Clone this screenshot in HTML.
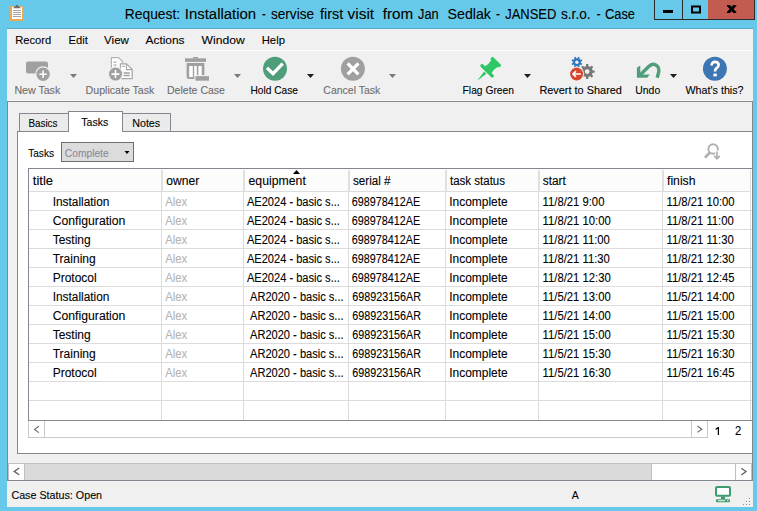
<!DOCTYPE html>
<html><head><meta charset="utf-8"><style>
html,body{margin:0;padding:0;width:757px;height:511px;overflow:hidden;background:#66c9e9;}
svg{position:absolute;left:0;top:0;display:block;}
text{font-family:"Liberation Sans",sans-serif;white-space:pre;}
</style></head><body>
<svg width="757" height="511" viewBox="0 0 757 511">
<rect x="0" y="0" width="757" height="511" fill="#66c9e9"/>
<rect x="7" y="28" width="746" height="1" fill="#5aa9cb"/>
<rect x="7" y="29" width="746" height="478" fill="#f0f0f0"/>
<rect x="10" y="6" width="14" height="15" fill="#eba957"/>
<rect x="12" y="7" width="10" height="12" fill="#ffffff"/>
<path d="M13.6 8.2 L20.4 8.2 L20.4 7.2 Q19.6 6.6 18.7 6.4 Q18.3 4.8 17 4.8 Q15.7 4.8 15.3 6.4 Q14.4 6.6 13.6 7.2 Z" fill="#6e6e6e"/>
<rect x="13" y="10" width="8" height="1" fill="#a4a4a4"/>
<rect x="13" y="12" width="8" height="1" fill="#a4a4a4"/>
<rect x="13" y="14" width="8" height="1" fill="#a4a4a4"/>
<rect x="13" y="16" width="8" height="1" fill="#a4a4a4"/>
<text x="124.80" y="19" font-size="15.4" fill="#000" textLength="55.29" lengthAdjust="spacingAndGlyphs" stroke="#000" stroke-width="0.1">Request:</text>
<text x="184.80" y="19" font-size="15.4" fill="#000" textLength="71.32" lengthAdjust="spacingAndGlyphs" stroke="#000" stroke-width="0.1">Installation</text>
<text x="262.10" y="19" font-size="15.4" fill="#000" textLength="3.78" lengthAdjust="spacingAndGlyphs" stroke="#000" stroke-width="0.1">-</text>
<text x="271.00" y="19" font-size="15.4" fill="#000" textLength="42.98" lengthAdjust="spacingAndGlyphs" stroke="#000" stroke-width="0.1">servise</text>
<text x="320.00" y="19" font-size="15.4" fill="#000" textLength="23.21" lengthAdjust="spacingAndGlyphs" stroke="#000" stroke-width="0.1">first</text>
<text x="347.50" y="19" font-size="15.4" fill="#000" textLength="26.62" lengthAdjust="spacingAndGlyphs" stroke="#000" stroke-width="0.1">visit</text>
<text x="382.70" y="19" font-size="15.4" fill="#000" textLength="30.40" lengthAdjust="spacingAndGlyphs" stroke="#000" stroke-width="0.1">from</text>
<text x="418.00" y="19" font-size="15.4" fill="#000" textLength="20.58" lengthAdjust="spacingAndGlyphs" stroke="#000" stroke-width="0.1">Jan</text>
<text x="447.50" y="19" font-size="15.4" fill="#000" textLength="43.44" lengthAdjust="spacingAndGlyphs" stroke="#000" stroke-width="0.1">Sedlak</text>
<text x="496.10" y="19" font-size="15.4" fill="#000" textLength="3.98" lengthAdjust="spacingAndGlyphs" stroke="#000" stroke-width="0.1">-</text>
<text x="505.20" y="19" font-size="15.4" fill="#000" textLength="51.21" lengthAdjust="spacingAndGlyphs" stroke="#000" stroke-width="0.1">JANSED</text>
<text x="561.00" y="19" font-size="15.4" fill="#000" textLength="29.58" lengthAdjust="spacingAndGlyphs" stroke="#000" stroke-width="0.1">s.r.o.</text>
<text x="596.50" y="19" font-size="15.4" fill="#000" textLength="4.18" lengthAdjust="spacingAndGlyphs" stroke="#000" stroke-width="0.1">-</text>
<text x="605.00" y="19" font-size="15.4" fill="#000" textLength="30.00" lengthAdjust="spacingAndGlyphs" stroke="#000" stroke-width="0.1">Case</text>
<rect x="654" y="0" width="101" height="20" fill="#2b2b2b"/>
<rect x="655" y="0" width="27" height="19" fill="#66c9e9"/>
<rect x="683" y="0" width="25" height="19" fill="#66c9e9"/>
<rect x="708" y="0" width="46" height="19" fill="#c35b50"/>
<rect x="663" y="10" width="10" height="3" fill="#000"/>
<rect x="692" y="6.5" width="8" height="6" fill="none" stroke="#000" stroke-width="2"/>
<clipPath id="cx"><rect x="726.8" y="5" width="9.6" height="8"/></clipPath>
<path d="M726.6 3.6 L736.6 14.4 M736.6 3.6 L726.6 14.4" stroke="#000" stroke-width="2.9" clip-path="url(#cx)"/>
<rect x="7" y="50" width="746" height="1" fill="#ffffff"/>
<text x="15.20" y="44" font-size="11.2" fill="#000" textLength="36.10" lengthAdjust="spacingAndGlyphs" stroke="#000" stroke-width="0.1">Record</text>
<text x="68.50" y="44" font-size="11.2" fill="#000" textLength="19.30" lengthAdjust="spacingAndGlyphs" stroke="#000" stroke-width="0.1">Edit</text>
<text x="104.10" y="44" font-size="11.2" fill="#000" textLength="24.82" lengthAdjust="spacingAndGlyphs" stroke="#000" stroke-width="0.1">View</text>
<text x="145.50" y="44" font-size="11.2" fill="#000" textLength="39.08" lengthAdjust="spacingAndGlyphs" stroke="#000" stroke-width="0.1">Actions</text>
<text x="201.50" y="44" font-size="11.2" fill="#000" textLength="43.23" lengthAdjust="spacingAndGlyphs" stroke="#000" stroke-width="0.1">Window</text>
<text x="261.70" y="44" font-size="11.2" fill="#000" textLength="23.28" lengthAdjust="spacingAndGlyphs" stroke="#000" stroke-width="0.1">Help</text>
<text x="14.40" y="94" font-size="11.2" fill="#6d6d6d" textLength="45.85" lengthAdjust="spacingAndGlyphs" stroke="#6d6d6d" stroke-width="0.1">New Task</text>
<text x="85.60" y="94" font-size="11.2" fill="#6d6d6d" textLength="68.73" lengthAdjust="spacingAndGlyphs" stroke="#6d6d6d" stroke-width="0.1">Duplicate Task</text>
<text x="167.00" y="94" font-size="11.2" fill="#6d6d6d" textLength="57.98" lengthAdjust="spacingAndGlyphs" stroke="#6d6d6d" stroke-width="0.1">Delete Case</text>
<text x="250.40" y="94" font-size="11.2" fill="#000" textLength="47.49" lengthAdjust="spacingAndGlyphs" stroke="#000" stroke-width="0.1">Hold Case</text>
<text x="323.30" y="94" font-size="11.2" fill="#6d6d6d" textLength="57.05" lengthAdjust="spacingAndGlyphs" stroke="#6d6d6d" stroke-width="0.1">Cancel Task</text>
<text x="462.60" y="94" font-size="11.2" fill="#000" textLength="51.38" lengthAdjust="spacingAndGlyphs" stroke="#000" stroke-width="0.1">Flag Green</text>
<text x="539.40" y="94" font-size="11.2" fill="#000" textLength="82.52" lengthAdjust="spacingAndGlyphs" stroke="#000" stroke-width="0.1">Revert to Shared</text>
<text x="635.30" y="94" font-size="11.2" fill="#000" textLength="24.88" lengthAdjust="spacingAndGlyphs" stroke="#000" stroke-width="0.1">Undo</text>
<text x="685.50" y="94" font-size="11.2" fill="#000" textLength="58.10" lengthAdjust="spacingAndGlyphs" stroke="#000" stroke-width="0.1">What's this?</text>
<rect x="26" y="61.5" width="22" height="12" rx="2" fill="#a0a0a0"/>
<circle cx="43.1" cy="74.2" r="7.9" fill="#f0f0f0"/><circle cx="43.1" cy="74.2" r="6.7" fill="#a0a0a0"/>
<path d="M39.4 74.2 H46.8 M43.1 70.5 V77.9" stroke="#fff" stroke-width="1.5"/>
<path d="M70 74 L77 74 L73.5 78 Z" fill="#7a7a7a"/>
<path d="M234 74 L241 74 L237.5 78 Z" fill="#7a7a7a"/>
<path d="M307 74 L314 74 L310.5 78 Z" fill="#1e1e1e"/>
<path d="M389 74 L396 74 L392.5 78 Z" fill="#7a7a7a"/>
<path d="M524 74 L531 74 L527.5 78 Z" fill="#1e1e1e"/>
<path d="M670 74 L677 74 L673.5 78 Z" fill="#1e1e1e"/>
<path d="M111.4 57.6 H118.6 L122.6 61.6 V70 H111.4 Z" fill="#fff" stroke="#b4b4b4" stroke-width="1.2"/>
<path d="M120.4 63.8 H126.6 L132.2 69.4 V78.6 H120.4 Z" fill="#fff" stroke="#a8a8a8" stroke-width="1.3"/>
<path d="M126.4 64 V69.6 H132" fill="none" stroke="#a8a8a8" stroke-width="1.1"/>
<path d="M123.6 73.1 H129.8 M123.6 75.6 H129.8" stroke="#a0a0a0" stroke-width="1.5"/>
<path d="M113.4 62.2 H116.6 M113.4 65.2 H116.6 M122.2 66.4 H124.8" stroke="#b0b0b0" stroke-width="1.2"/>
<circle cx="115.5" cy="74.1" r="7.6" fill="#f0f0f0"/><circle cx="115.5" cy="74.1" r="6.5" fill="#a0a0a0"/>
<path d="M111.5 74.1 H119.5 M115.5 70.1 V78.1" stroke="#fff" stroke-width="1.6"/>
<rect x="185" y="58.3" width="21" height="3.6" fill="#a0a0a0"/>
<rect x="193.2" y="57" width="4.8" height="1.5" fill="#a0a0a0"/>
<path d="M186.6 63 H204.4 V79 H188.6 Q186.6 79 186.6 77 Z" fill="#a0a0a0"/>
<rect x="189.2" y="66" width="3.6" height="11" fill="#fff"/>
<rect x="194.2" y="66" width="2.6" height="11" fill="#fff"/>
<rect x="198.4" y="66" width="3.3" height="11" fill="#fff"/>
<rect x="194.5" y="75" width="15.5" height="6.5" fill="#f0f0f0"/>
<rect x="195.5" y="76.1" width="13.5" height="4.6" fill="#a0a0a0"/>
<circle cx="275" cy="68.8" r="12" fill="#4e9e7a"/>
<path d="M267 67.9 L273 73.7 L282.7 63.6" fill="none" stroke="#fff" stroke-width="3.4"/>
<circle cx="352.9" cy="68.8" r="12" fill="#a0a0a0"/>
<path d="M347.6 63.4 L358.4 74.4 M358.4 63.4 L347.6 74.4" stroke="#fff" stroke-width="3.2"/>
<g fill="#2ec866" transform="translate(477.2,80.7) rotate(-45)"><path d="M0 0 L11.4 -1.6 L11.4 1.6 Z"/><rect x="12.4" y="-8.8" width="3.3" height="17.6" rx="1.3"/><path d="M15 -4.8 Q20 -3.4 25 -4.8 L25 4.8 Q20 3.4 15 4.8 Z"/><rect x="24.4" y="-6.3" width="3.6" height="12.6" rx="1.1"/></g>
<path d="M577.58 58.16 L578.09 56.83 L579.86 57.56 L579.28 58.86 L580.24 59.82 L581.54 59.24 L582.27 61.01 L580.94 61.52 L580.94 62.88 L582.27 63.39 L581.54 65.16 L580.24 64.58 L579.28 65.54 L579.86 66.84 L578.09 67.57 L577.58 66.24 L576.22 66.24 L575.71 67.57 L573.94 66.84 L574.52 65.54 L573.56 64.58 L572.26 65.16 L571.53 63.39 L572.86 62.88 L572.86 61.52 L571.53 61.01 L572.26 59.24 L573.56 59.82 L574.52 58.86 L573.94 57.56 L575.71 56.83 L576.22 58.16 Z" fill="#2f78be"/><circle cx="576.9" cy="62.2" r="1.7" fill="#f0f0f0"/>
<path d="M586.04 66.12 L586.01 64.09 L588.39 64.09 L588.36 66.12 L590.25 66.90 L591.67 65.45 L593.35 67.13 L591.90 68.55 L592.68 70.44 L594.71 70.41 L594.71 72.79 L592.68 72.76 L591.90 74.65 L593.35 76.07 L591.67 77.75 L590.25 76.30 L588.36 77.08 L588.39 79.11 L586.01 79.11 L586.04 77.08 L584.15 76.30 L582.73 77.75 L581.05 76.07 L582.50 74.65 L581.72 72.76 L579.69 72.79 L579.69 70.41 L581.72 70.44 L582.50 68.55 L581.05 67.13 L582.73 65.45 L584.15 66.90 Z" fill="#787878"/><circle cx="587.2" cy="71.6" r="2.3" fill="#f0f0f0"/>
<circle cx="576.6" cy="74" r="7.5" fill="#f0f0f0"/><circle cx="576.6" cy="74" r="6.5" fill="#d9462e"/>
<path d="M580.8 74 H573.4 M575.9 71.2 L573.1 74 L575.9 76.8" fill="none" stroke="#fff" stroke-width="1.7"/>
<path d="M639.5 75.5 L649 66.3 C651.4 64.2 653.8 63.9 655.8 64.9 C658.6 66.3 659.4 69.8 658.4 73.2 L657.2 77.8" fill="none" stroke="#4e9e7a" stroke-width="3.4"/>
<path d="M636.9 67.8 L640.3 65.4 L640.3 74.5 L649.8 74.5 L647.2 77.8 L636.9 77.8 Z" fill="#4e9e7a"/>
<circle cx="714.9" cy="68.8" r="12" fill="#3c76b4"/>
<path d="M711.6 65.6 C711.6 63 713.2 61.8 715.1 61.8 C717.2 61.8 718.6 63.1 718.6 65 C718.6 66.8 717.5 67.6 716.4 68.4 C715.6 69 715.1 69.6 715.1 70.8 L715.1 71.6" fill="none" stroke="#fff" stroke-width="2.7"/>
<rect x="713.4" y="73.6" width="3.4" height="2.8" fill="#fff"/>
<rect x="7" y="100" width="746" height="1" fill="#f8f8f8"/>
<rect x="7.5" y="101.5" width="745" height="379" fill="#f0f0f0" stroke="#828790" stroke-width="1"/>
<rect x="19.5" y="113.5" width="49" height="19" fill="#ebebeb" stroke="#828790"/>
<rect x="122.5" y="113.5" width="48" height="19" fill="#ebebeb" stroke="#828790"/>
<rect x="17.5" y="131.5" width="735" height="322" fill="#fff" stroke="#828790"/>
<rect x="68.5" y="111.5" width="54" height="20" fill="#fff" stroke="#828790"/>
<rect x="69" y="131" width="53" height="1" fill="#fff"/>
<text x="28.40" y="127" font-size="11.2" fill="#000" textLength="29.09" lengthAdjust="spacingAndGlyphs" stroke="#000" stroke-width="0.1">Basics</text>
<text x="81.30" y="126" font-size="11.2" fill="#000" textLength="26.98" lengthAdjust="spacingAndGlyphs" stroke="#000" stroke-width="0.1">Tasks</text>
<text x="132.20" y="127" font-size="11.2" fill="#000" textLength="28.01" lengthAdjust="spacingAndGlyphs" stroke="#000" stroke-width="0.1">Notes</text>
<text x="28.20" y="157" font-size="11.2" fill="#000" textLength="25.78" lengthAdjust="spacingAndGlyphs" stroke="#000" stroke-width="0.1">Tasks</text>
<rect x="61.5" y="142.5" width="72" height="19" fill="#dcdcdc" stroke="#6e6e6e"/>
<text x="64.80" y="157" font-size="11.2" fill="#8a8a9a" textLength="43.88" lengthAdjust="spacingAndGlyphs" stroke="#8a8a9a" stroke-width="0.1">Complete</text>
<path d="M124.5 151 H129.5 L127 154 Z" fill="#000"/>
<g stroke="#b0b0b0" fill="none" stroke-width="1.9"><circle cx="713.1" cy="149" r="4.75"/><path d="M709.6 152.8 L705 157.6" stroke-width="2.8"/><path d="M717 150.5 V158" stroke="#fff" stroke-width="3.5"/><path d="M717 151.5 V158.6 M714.2 155.8 L717 158.8 L719.8 155.8" stroke-width="1.7"/></g>
<rect x="28" y="168" width="725" height="253" fill="#fff"/>
<rect x="29" y="169" width="723" height="22" fill="#fcfcfc"/>
<rect x="28" y="168" width="725" height="1" fill="#828790"/>
<rect x="28" y="168" width="1" height="253" fill="#828790"/>
<rect x="28" y="420" width="725" height="1" fill="#828790"/>
<rect x="752" y="168" width="1" height="286" fill="#828790"/>
<rect x="29" y="191" width="723" height="1" fill="#dcdcdc"/>
<rect x="161" y="191" width="1" height="229" fill="#dcdcdc"/>
<rect x="161" y="170" width="2" height="21" fill="#e0e0e0"/>
<rect x="243" y="191" width="1" height="229" fill="#dcdcdc"/>
<rect x="243" y="170" width="2" height="21" fill="#e0e0e0"/>
<rect x="348" y="191" width="1" height="229" fill="#dcdcdc"/>
<rect x="348" y="170" width="2" height="21" fill="#e0e0e0"/>
<rect x="445" y="191" width="1" height="229" fill="#dcdcdc"/>
<rect x="445" y="170" width="2" height="21" fill="#e0e0e0"/>
<rect x="538" y="191" width="1" height="229" fill="#dcdcdc"/>
<rect x="538" y="170" width="2" height="21" fill="#e0e0e0"/>
<rect x="662" y="191" width="1" height="229" fill="#dcdcdc"/>
<rect x="662" y="170" width="2" height="21" fill="#e0e0e0"/>
<rect x="750" y="170" width="1" height="250" fill="#dcdcdc"/>
<rect x="751" y="169" width="1" height="251" fill="#fff"/>
<rect x="29" y="210" width="723" height="1" fill="#dcdcdc"/>
<rect x="29" y="229" width="723" height="1" fill="#dcdcdc"/>
<rect x="29" y="248" width="723" height="1" fill="#dcdcdc"/>
<rect x="29" y="267" width="723" height="1" fill="#dcdcdc"/>
<rect x="29" y="286" width="723" height="1" fill="#dcdcdc"/>
<rect x="29" y="305" width="723" height="1" fill="#dcdcdc"/>
<rect x="29" y="324" width="723" height="1" fill="#dcdcdc"/>
<rect x="29" y="343" width="723" height="1" fill="#dcdcdc"/>
<rect x="29" y="362" width="723" height="1" fill="#dcdcdc"/>
<rect x="29" y="381" width="723" height="1" fill="#dcdcdc"/>
<rect x="29" y="400" width="723" height="1" fill="#dcdcdc"/>
<text x="32.80" y="185" font-size="12.5" fill="#000" textLength="20.30" lengthAdjust="spacingAndGlyphs" stroke="#000" stroke-width="0.1">title</text>
<text x="166.20" y="185" font-size="12.5" fill="#000" textLength="32.99" lengthAdjust="spacingAndGlyphs" stroke="#000" stroke-width="0.1">owner</text>
<text x="248.50" y="185" font-size="12.5" fill="#000" textLength="57.32" lengthAdjust="spacingAndGlyphs" stroke="#000" stroke-width="0.1">equipment</text>
<text x="353.00" y="185" font-size="12.5" fill="#000" textLength="37.49" lengthAdjust="spacingAndGlyphs" stroke="#000" stroke-width="0.1">serial #</text>
<text x="450.00" y="185" font-size="12.5" fill="#000" textLength="55.00" lengthAdjust="spacingAndGlyphs" stroke="#000" stroke-width="0.1">task status</text>
<text x="542.70" y="185" font-size="12.5" fill="#000" textLength="23.11" lengthAdjust="spacingAndGlyphs" stroke="#000" stroke-width="0.1">start</text>
<text x="667.00" y="185" font-size="12.5" fill="#000" textLength="28.48" lengthAdjust="spacingAndGlyphs" stroke="#000" stroke-width="0.1">finish</text>
<path d="M293 174 H300 L296.5 170 Z" fill="#000"/>
<text x="52.70" y="206" font-size="12.5" fill="#000" textLength="56.71" lengthAdjust="spacingAndGlyphs" stroke="#000" stroke-width="0.1">Installation</text>
<text x="165.20" y="206" font-size="12.5" fill="#b4b4b4" textLength="22.11" lengthAdjust="spacingAndGlyphs" stroke="#b4b4b4" stroke-width="0.1">Alex</text>
<text x="246.90" y="206" font-size="12.5" fill="#000" textLength="93.01" lengthAdjust="spacingAndGlyphs" stroke="#000" stroke-width="0.1">AE2024 - basic s...</text>
<text x="351.80" y="206" font-size="12.5" fill="#000" textLength="68.49" lengthAdjust="spacingAndGlyphs" stroke="#000" stroke-width="0.1">698978412AE</text>
<text x="449.20" y="206" font-size="12.5" fill="#000" textLength="58.59" lengthAdjust="spacingAndGlyphs" stroke="#000" stroke-width="0.1">Incomplete</text>
<text x="542.60" y="206" font-size="12.5" fill="#000" textLength="61.81" lengthAdjust="spacingAndGlyphs" stroke="#000" stroke-width="0.1">11/8/21 9:00</text>
<text x="666.50" y="206" font-size="12.5" fill="#000" textLength="68.08" lengthAdjust="spacingAndGlyphs" stroke="#000" stroke-width="0.1">11/8/21 10:00</text>
<text x="52.70" y="225" font-size="12.5" fill="#000" textLength="72.70" lengthAdjust="spacingAndGlyphs" stroke="#000" stroke-width="0.1">Configuration</text>
<text x="165.20" y="225" font-size="12.5" fill="#b4b4b4" textLength="22.11" lengthAdjust="spacingAndGlyphs" stroke="#b4b4b4" stroke-width="0.1">Alex</text>
<text x="246.90" y="225" font-size="12.5" fill="#000" textLength="93.01" lengthAdjust="spacingAndGlyphs" stroke="#000" stroke-width="0.1">AE2024 - basic s...</text>
<text x="351.80" y="225" font-size="12.5" fill="#000" textLength="68.49" lengthAdjust="spacingAndGlyphs" stroke="#000" stroke-width="0.1">698978412AE</text>
<text x="449.20" y="225" font-size="12.5" fill="#000" textLength="58.59" lengthAdjust="spacingAndGlyphs" stroke="#000" stroke-width="0.1">Incomplete</text>
<text x="542.60" y="225" font-size="12.5" fill="#000" textLength="68.08" lengthAdjust="spacingAndGlyphs" stroke="#000" stroke-width="0.1">11/8/21 10:00</text>
<text x="666.50" y="225" font-size="12.5" fill="#000" textLength="67.24" lengthAdjust="spacingAndGlyphs" stroke="#000" stroke-width="0.1">11/8/21 11:00</text>
<text x="52.70" y="244" font-size="12.5" fill="#000" textLength="38.00" lengthAdjust="spacingAndGlyphs" stroke="#000" stroke-width="0.1">Testing</text>
<text x="165.20" y="244" font-size="12.5" fill="#b4b4b4" textLength="22.11" lengthAdjust="spacingAndGlyphs" stroke="#b4b4b4" stroke-width="0.1">Alex</text>
<text x="246.90" y="244" font-size="12.5" fill="#000" textLength="93.01" lengthAdjust="spacingAndGlyphs" stroke="#000" stroke-width="0.1">AE2024 - basic s...</text>
<text x="351.80" y="244" font-size="12.5" fill="#000" textLength="68.49" lengthAdjust="spacingAndGlyphs" stroke="#000" stroke-width="0.1">698978412AE</text>
<text x="449.20" y="244" font-size="12.5" fill="#000" textLength="58.59" lengthAdjust="spacingAndGlyphs" stroke="#000" stroke-width="0.1">Incomplete</text>
<text x="542.60" y="244" font-size="12.5" fill="#000" textLength="67.24" lengthAdjust="spacingAndGlyphs" stroke="#000" stroke-width="0.1">11/8/21 11:00</text>
<text x="666.50" y="244" font-size="12.5" fill="#000" textLength="67.24" lengthAdjust="spacingAndGlyphs" stroke="#000" stroke-width="0.1">11/8/21 11:30</text>
<text x="52.70" y="263" font-size="12.5" fill="#000" textLength="42.99" lengthAdjust="spacingAndGlyphs" stroke="#000" stroke-width="0.1">Training</text>
<text x="165.20" y="263" font-size="12.5" fill="#b4b4b4" textLength="22.11" lengthAdjust="spacingAndGlyphs" stroke="#b4b4b4" stroke-width="0.1">Alex</text>
<text x="246.90" y="263" font-size="12.5" fill="#000" textLength="93.01" lengthAdjust="spacingAndGlyphs" stroke="#000" stroke-width="0.1">AE2024 - basic s...</text>
<text x="351.80" y="263" font-size="12.5" fill="#000" textLength="68.49" lengthAdjust="spacingAndGlyphs" stroke="#000" stroke-width="0.1">698978412AE</text>
<text x="449.20" y="263" font-size="12.5" fill="#000" textLength="58.59" lengthAdjust="spacingAndGlyphs" stroke="#000" stroke-width="0.1">Incomplete</text>
<text x="542.60" y="263" font-size="12.5" fill="#000" textLength="67.24" lengthAdjust="spacingAndGlyphs" stroke="#000" stroke-width="0.1">11/8/21 11:30</text>
<text x="666.50" y="263" font-size="12.5" fill="#000" textLength="68.08" lengthAdjust="spacingAndGlyphs" stroke="#000" stroke-width="0.1">11/8/21 12:30</text>
<text x="52.70" y="282" font-size="12.5" fill="#000" textLength="44.00" lengthAdjust="spacingAndGlyphs" stroke="#000" stroke-width="0.1">Protocol</text>
<text x="165.20" y="282" font-size="12.5" fill="#b4b4b4" textLength="22.11" lengthAdjust="spacingAndGlyphs" stroke="#b4b4b4" stroke-width="0.1">Alex</text>
<text x="246.90" y="282" font-size="12.5" fill="#000" textLength="93.01" lengthAdjust="spacingAndGlyphs" stroke="#000" stroke-width="0.1">AE2024 - basic s...</text>
<text x="351.80" y="282" font-size="12.5" fill="#000" textLength="68.49" lengthAdjust="spacingAndGlyphs" stroke="#000" stroke-width="0.1">698978412AE</text>
<text x="449.20" y="282" font-size="12.5" fill="#000" textLength="58.59" lengthAdjust="spacingAndGlyphs" stroke="#000" stroke-width="0.1">Incomplete</text>
<text x="542.60" y="282" font-size="12.5" fill="#000" textLength="68.08" lengthAdjust="spacingAndGlyphs" stroke="#000" stroke-width="0.1">11/8/21 12:30</text>
<text x="666.50" y="282" font-size="12.5" fill="#000" textLength="68.08" lengthAdjust="spacingAndGlyphs" stroke="#000" stroke-width="0.1">11/8/21 12:45</text>
<text x="52.70" y="301" font-size="12.5" fill="#000" textLength="56.71" lengthAdjust="spacingAndGlyphs" stroke="#000" stroke-width="0.1">Installation</text>
<text x="165.20" y="301" font-size="12.5" fill="#b4b4b4" textLength="22.11" lengthAdjust="spacingAndGlyphs" stroke="#b4b4b4" stroke-width="0.1">Alex</text>
<text x="250.00" y="301" font-size="12.5" fill="#000" textLength="93.60" lengthAdjust="spacingAndGlyphs" stroke="#000" stroke-width="0.1">AR2020 - basic s...</text>
<text x="352.30" y="301" font-size="12.5" fill="#000" textLength="68.68" lengthAdjust="spacingAndGlyphs" stroke="#000" stroke-width="0.1">698923156AR</text>
<text x="449.20" y="301" font-size="12.5" fill="#000" textLength="58.59" lengthAdjust="spacingAndGlyphs" stroke="#000" stroke-width="0.1">Incomplete</text>
<text x="542.60" y="301" font-size="12.5" fill="#000" textLength="68.08" lengthAdjust="spacingAndGlyphs" stroke="#000" stroke-width="0.1">11/5/21 13:00</text>
<text x="666.50" y="301" font-size="12.5" fill="#000" textLength="68.08" lengthAdjust="spacingAndGlyphs" stroke="#000" stroke-width="0.1">11/5/21 14:00</text>
<text x="52.70" y="320" font-size="12.5" fill="#000" textLength="72.70" lengthAdjust="spacingAndGlyphs" stroke="#000" stroke-width="0.1">Configuration</text>
<text x="165.20" y="320" font-size="12.5" fill="#b4b4b4" textLength="22.11" lengthAdjust="spacingAndGlyphs" stroke="#b4b4b4" stroke-width="0.1">Alex</text>
<text x="250.00" y="320" font-size="12.5" fill="#000" textLength="93.60" lengthAdjust="spacingAndGlyphs" stroke="#000" stroke-width="0.1">AR2020 - basic s...</text>
<text x="352.30" y="320" font-size="12.5" fill="#000" textLength="68.68" lengthAdjust="spacingAndGlyphs" stroke="#000" stroke-width="0.1">698923156AR</text>
<text x="449.20" y="320" font-size="12.5" fill="#000" textLength="58.59" lengthAdjust="spacingAndGlyphs" stroke="#000" stroke-width="0.1">Incomplete</text>
<text x="542.60" y="320" font-size="12.5" fill="#000" textLength="68.08" lengthAdjust="spacingAndGlyphs" stroke="#000" stroke-width="0.1">11/5/21 14:00</text>
<text x="666.50" y="320" font-size="12.5" fill="#000" textLength="68.08" lengthAdjust="spacingAndGlyphs" stroke="#000" stroke-width="0.1">11/5/21 15:00</text>
<text x="52.70" y="339" font-size="12.5" fill="#000" textLength="38.00" lengthAdjust="spacingAndGlyphs" stroke="#000" stroke-width="0.1">Testing</text>
<text x="165.20" y="339" font-size="12.5" fill="#b4b4b4" textLength="22.11" lengthAdjust="spacingAndGlyphs" stroke="#b4b4b4" stroke-width="0.1">Alex</text>
<text x="250.00" y="339" font-size="12.5" fill="#000" textLength="93.60" lengthAdjust="spacingAndGlyphs" stroke="#000" stroke-width="0.1">AR2020 - basic s...</text>
<text x="352.30" y="339" font-size="12.5" fill="#000" textLength="68.68" lengthAdjust="spacingAndGlyphs" stroke="#000" stroke-width="0.1">698923156AR</text>
<text x="449.20" y="339" font-size="12.5" fill="#000" textLength="58.59" lengthAdjust="spacingAndGlyphs" stroke="#000" stroke-width="0.1">Incomplete</text>
<text x="542.60" y="339" font-size="12.5" fill="#000" textLength="68.08" lengthAdjust="spacingAndGlyphs" stroke="#000" stroke-width="0.1">11/5/21 15:00</text>
<text x="666.50" y="339" font-size="12.5" fill="#000" textLength="68.08" lengthAdjust="spacingAndGlyphs" stroke="#000" stroke-width="0.1">11/5/21 15:30</text>
<text x="52.70" y="358" font-size="12.5" fill="#000" textLength="42.99" lengthAdjust="spacingAndGlyphs" stroke="#000" stroke-width="0.1">Training</text>
<text x="165.20" y="358" font-size="12.5" fill="#b4b4b4" textLength="22.11" lengthAdjust="spacingAndGlyphs" stroke="#b4b4b4" stroke-width="0.1">Alex</text>
<text x="250.00" y="358" font-size="12.5" fill="#000" textLength="93.60" lengthAdjust="spacingAndGlyphs" stroke="#000" stroke-width="0.1">AR2020 - basic s...</text>
<text x="352.30" y="358" font-size="12.5" fill="#000" textLength="68.68" lengthAdjust="spacingAndGlyphs" stroke="#000" stroke-width="0.1">698923156AR</text>
<text x="449.20" y="358" font-size="12.5" fill="#000" textLength="58.59" lengthAdjust="spacingAndGlyphs" stroke="#000" stroke-width="0.1">Incomplete</text>
<text x="542.60" y="358" font-size="12.5" fill="#000" textLength="68.08" lengthAdjust="spacingAndGlyphs" stroke="#000" stroke-width="0.1">11/5/21 15:30</text>
<text x="666.50" y="358" font-size="12.5" fill="#000" textLength="68.08" lengthAdjust="spacingAndGlyphs" stroke="#000" stroke-width="0.1">11/5/21 16:30</text>
<text x="52.70" y="377" font-size="12.5" fill="#000" textLength="44.00" lengthAdjust="spacingAndGlyphs" stroke="#000" stroke-width="0.1">Protocol</text>
<text x="165.20" y="377" font-size="12.5" fill="#b4b4b4" textLength="22.11" lengthAdjust="spacingAndGlyphs" stroke="#b4b4b4" stroke-width="0.1">Alex</text>
<text x="250.00" y="377" font-size="12.5" fill="#000" textLength="93.60" lengthAdjust="spacingAndGlyphs" stroke="#000" stroke-width="0.1">AR2020 - basic s...</text>
<text x="352.30" y="377" font-size="12.5" fill="#000" textLength="68.68" lengthAdjust="spacingAndGlyphs" stroke="#000" stroke-width="0.1">698923156AR</text>
<text x="449.20" y="377" font-size="12.5" fill="#000" textLength="58.59" lengthAdjust="spacingAndGlyphs" stroke="#000" stroke-width="0.1">Incomplete</text>
<text x="542.60" y="377" font-size="12.5" fill="#000" textLength="68.08" lengthAdjust="spacingAndGlyphs" stroke="#000" stroke-width="0.1">11/5/21 16:30</text>
<text x="666.50" y="377" font-size="12.5" fill="#000" textLength="68.08" lengthAdjust="spacingAndGlyphs" stroke="#000" stroke-width="0.1">11/5/21 16:45</text>
<rect x="28.5" y="420.5" width="679" height="17" fill="#fff" stroke="#c8c8c8"/>
<rect x="44" y="421" width="1" height="17" fill="#c8c8c8"/>
<rect x="691" y="421" width="1" height="17" fill="#c8c8c8"/>
<path d="M38.8 426.2 L34.6 429.4 L38.8 432.6" fill="none" stroke="#6a6a6a" stroke-width="1.15"/>
<path d="M697.4 426 L701.8 429.2 L697.4 432.4" fill="none" stroke="#6a6a6a" stroke-width="1.15"/>
<rect x="28" y="420" width="725" height="1" fill="#828790"/>
<path d="M718.4 427 V435 M715.6 429.4 L718.6 427.2" fill="none" stroke="#000" stroke-width="1.25"/>
<text x="734.90" y="435" font-size="12.2" fill="#000" textLength="6.29" lengthAdjust="spacingAndGlyphs" stroke="#000" stroke-width="0.1">2</text>
<rect x="8.5" y="463.5" width="743" height="17" fill="#fff" stroke="#c0c0c0"/>
<rect x="25" y="464" width="626" height="16" fill="#dadada"/>
<rect x="24" y="464" width="1" height="17" fill="#c0c0c0"/>
<rect x="651" y="464" width="1" height="17" fill="#c0c0c0"/>
<rect x="735" y="464" width="1" height="17" fill="#c0c0c0"/>
<rect x="7" y="480" width="746" height="1" fill="#828790"/>
<path d="M19.2 468 L14.2 471.4 L19.2 474.8" fill="none" stroke="#606060" stroke-width="1.3"/>
<path d="M741.4 468.2 L746 471.6 L741.4 475" fill="none" stroke="#606060" stroke-width="1.3"/>
<text x="11.40" y="499" font-size="11.2" fill="#000" textLength="90.68" lengthAdjust="spacingAndGlyphs" stroke="#000" stroke-width="0.1">Case Status: Open</text>
<text x="571.80" y="499" font-size="11.2" fill="#000" textLength="7.02" lengthAdjust="spacingAndGlyphs" stroke="#000" stroke-width="0.1">A</text>
<g fill="#fff" stroke="#3e9b6e" stroke-width="2"><rect x="716" y="487" width="14" height="8.7" rx="1"/></g>
<rect x="721" y="496.5" width="4" height="2.5" fill="#3e9b6e"/>
<rect x="716" y="499.2" width="14" height="3" rx="1" fill="#3e9b6e"/>
<rect x="718" y="500.2" width="7" height="1" fill="#f4f8f6"/>
<rect x="727" y="500.2" width="1.5" height="1" fill="#f4f8f6"/>
<rect x="749" y="498" width="1" height="1" fill="#8c8c8c"/>
<rect x="750" y="499" width="1" height="1" fill="#ffffff"/>
<rect x="746" y="501" width="1" height="1" fill="#8c8c8c"/>
<rect x="747" y="502" width="1" height="1" fill="#ffffff"/>
<rect x="749" y="501" width="1" height="1" fill="#8c8c8c"/>
<rect x="750" y="502" width="1" height="1" fill="#ffffff"/>
<rect x="743" y="504" width="1" height="1" fill="#8c8c8c"/>
<rect x="744" y="505" width="1" height="1" fill="#ffffff"/>
<rect x="746" y="504" width="1" height="1" fill="#8c8c8c"/>
<rect x="747" y="505" width="1" height="1" fill="#ffffff"/>
<rect x="749" y="504" width="1" height="1" fill="#8c8c8c"/>
<rect x="750" y="505" width="1" height="1" fill="#ffffff"/>
<rect x="7" y="507" width="746" height="4" fill="#66c9e9"/>
</svg>
</body></html>
